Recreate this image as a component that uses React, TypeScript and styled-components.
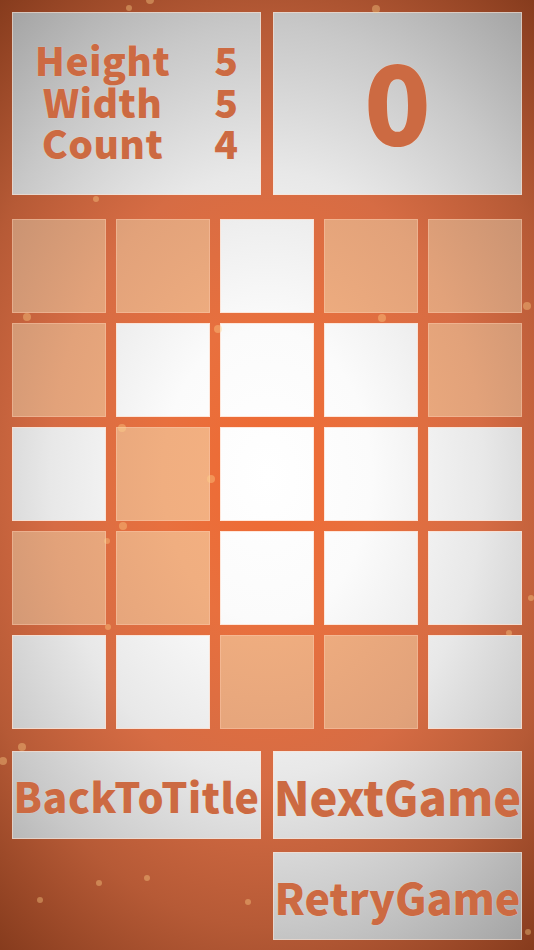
import React from 'react';
import styled, { createGlobalStyle, css } from 'styled-components';

const GlobalStyle = createGlobalStyle`
  html, body {
    margin: 0;
    padding: 0;
    width: 534px;
    height: 950px;
    overflow: hidden;
  }
  body {
    font-family: "Noto Sans CJK JP", "Noto Sans", sans-serif;
  }
`;

// gradients are pinned to the viewport so every panel shares one vignette
const whiteFill = css`
  background: radial-gradient(ellipse 70% 55% at 50% 50%, #ffffff 0%, #fbfbfb 28%, #e8e8e8 58%, #c8c8c8 86%, #a4a4a4 112%) fixed;
`;

const peachFill = css`
  background: radial-gradient(ellipse 70% 55% at 50% 50%, #f6b282 0%, #f0ae80 28%, #e2a27a 58%, #c89272 86%, #a87a5e 112%) fixed;
`;

const textColor = '#cc6a42';
const textWeight = 900;

const Screen = styled.div`
  position: relative;
  width: 534px;
  height: 950px;
  box-sizing: border-box;
  padding: 12px 12px 10px;
  display: flex;
  flex-direction: column;
  overflow: hidden;
  background: radial-gradient(ellipse 72% 58% at 50% 50%, #f06a32 0%, #e8703e 28%, #d66c44 56%, #b65a36 82%, #843a1c 112%) fixed;
`;

const Particle = styled.span<{ $x: number; $y: number; $r: number }>`
  position: absolute;
  left: ${(p) => p.$x - p.$r}px;
  top: ${(p) => p.$y - p.$r}px;
  width: ${(p) => p.$r * 2}px;
  height: ${(p) => p.$r * 2}px;
  border-radius: 50%;
  background: rgba(255, 214, 140, 0.38);
  filter: blur(0.6px);
  pointer-events: none;
`;

const TopRow = styled.div`
  display: grid;
  grid-template-columns: 249px 249px;
  column-gap: 12px;
  height: 183px;
`;

const Panel = styled.div`
  ${whiteFill};
  box-sizing: border-box;
  border: 1px solid rgba(255, 226, 210, 0.55);
  display: flex;
  align-items: center;
  justify-content: center;
  color: ${textColor};
  font-weight: ${textWeight};
  text-shadow: 0 0 1px rgba(255, 225, 205, 0.9);
`;

const Stats = styled.div`
  display: grid;
  grid-template-columns: 155px 58px;
  padding: 0 24px 0 12px;
  width: 100%;
  box-sizing: border-box;
  font-size: 39px;
  line-height: 41.5px;
  margin-top: -4px;
`;

const StatLabel = styled.div`
  text-align: center;
  letter-spacing: 0.4px;
`;

const StatValue = styled.div`
  text-align: right;
`;

const Score = styled.div`
  font-size: 110px;
  line-height: 1;
  margin-top: -14px;
`;

const Board = styled.div`
  margin-top: 24px;
  display: grid;
  grid-template-columns: repeat(5, 94px);
  grid-auto-rows: 94px;
  gap: 10px;
`;

const Cell = styled.div<{ $on: boolean }>`
  ${(p) => (p.$on ? peachFill : whiteFill)};
  box-sizing: border-box;
  border: 1px solid ${(p) => (p.$on ? 'rgba(255, 200, 170, 0.45)' : 'rgba(255, 222, 205, 0.7)')};
`;

const Buttons = styled.div`
  margin-top: 22px;
  display: grid;
  grid-template-columns: 249px 249px;
  grid-template-rows: 88px 88px;
  column-gap: 12px;
  row-gap: 13px;
`;

const Button = styled.button<{ $size: number; $spacing?: number; $col?: number }>`
  ${whiteFill};
  grid-column: ${(p) => p.$col ?? 'auto'};
  box-sizing: border-box;
  border: 1px solid rgba(255, 226, 210, 0.55);
  margin: 0;
  padding: 0;
  display: flex;
  align-items: center;
  justify-content: center;
  font-family: "Noto Sans CJK JP", "Noto Sans", sans-serif;
  font-weight: ${textWeight};
  font-size: ${(p) => p.$size}px;
  letter-spacing: ${(p) => p.$spacing ?? 0}px;
  line-height: 1;
  color: ${textColor};
  text-shadow: 0 0 1px rgba(255, 225, 205, 0.9);
  white-space: nowrap;
  cursor: pointer;
`;

const board = [
  [1, 1, 0, 1, 1],
  [1, 0, 0, 0, 1],
  [0, 1, 0, 0, 0],
  [1, 1, 0, 0, 0],
  [0, 0, 1, 1, 0],
];

const stats = [
  { label: 'Height', value: 5 },
  { label: 'Width', value: 5 },
  { label: 'Count', value: 4 },
];

const particles = [
  { x: 150, y: 0, r: 4 },
  { x: 129, y: 8, r: 3 },
  { x: 376, y: 9, r: 4 },
  { x: 96, y: 199, r: 3 },
  { x: 27, y: 317, r: 4 },
  { x: 382, y: 318, r: 4 },
  { x: 218, y: 329, r: 4 },
  { x: 527, y: 306, r: 4 },
  { x: 122, y: 428, r: 4 },
  { x: 211, y: 479, r: 4 },
  { x: 123, y: 526, r: 4 },
  { x: 107, y: 541, r: 3 },
  { x: 108, y: 627, r: 3 },
  { x: 509, y: 633, r: 3 },
  { x: 531, y: 598, r: 3 },
  { x: 22, y: 747, r: 4 },
  { x: 3, y: 761, r: 4 },
  { x: 99, y: 883, r: 3 },
  { x: 147, y: 878, r: 3 },
  { x: 40, y: 900, r: 3 },
  { x: 248, y: 902, r: 3 },
  { x: 528, y: 932, r: 3 },
];

const App = () => {
  return (
    <>
      <GlobalStyle />
      <Screen>
        <TopRow>
          <Panel>
            <Stats>
              {stats.map((s) => (
                <React.Fragment key={s.label}>
                  <StatLabel>{s.label}</StatLabel>
                  <StatValue>{s.value}</StatValue>
                </React.Fragment>
              ))}
            </Stats>
          </Panel>
          <Panel>
            <Score>0</Score>
          </Panel>
        </TopRow>

        <Board>
          {board.flat().map((v, i) => (
            <Cell key={i} $on={v === 1} />
          ))}
        </Board>

        <Buttons>
          <Button $size={41} $spacing={0.5}>BackToTitle</Button>
          <Button $size={47}>NextGame</Button>
          <Button $size={43} $col={2}>RetryGame</Button>
        </Buttons>

        {particles.map((p, i) => (
          <Particle key={i} $x={p.x} $y={p.y} $r={p.r} />
        ))}
      </Screen>
    </>
  );
};

export default App;
